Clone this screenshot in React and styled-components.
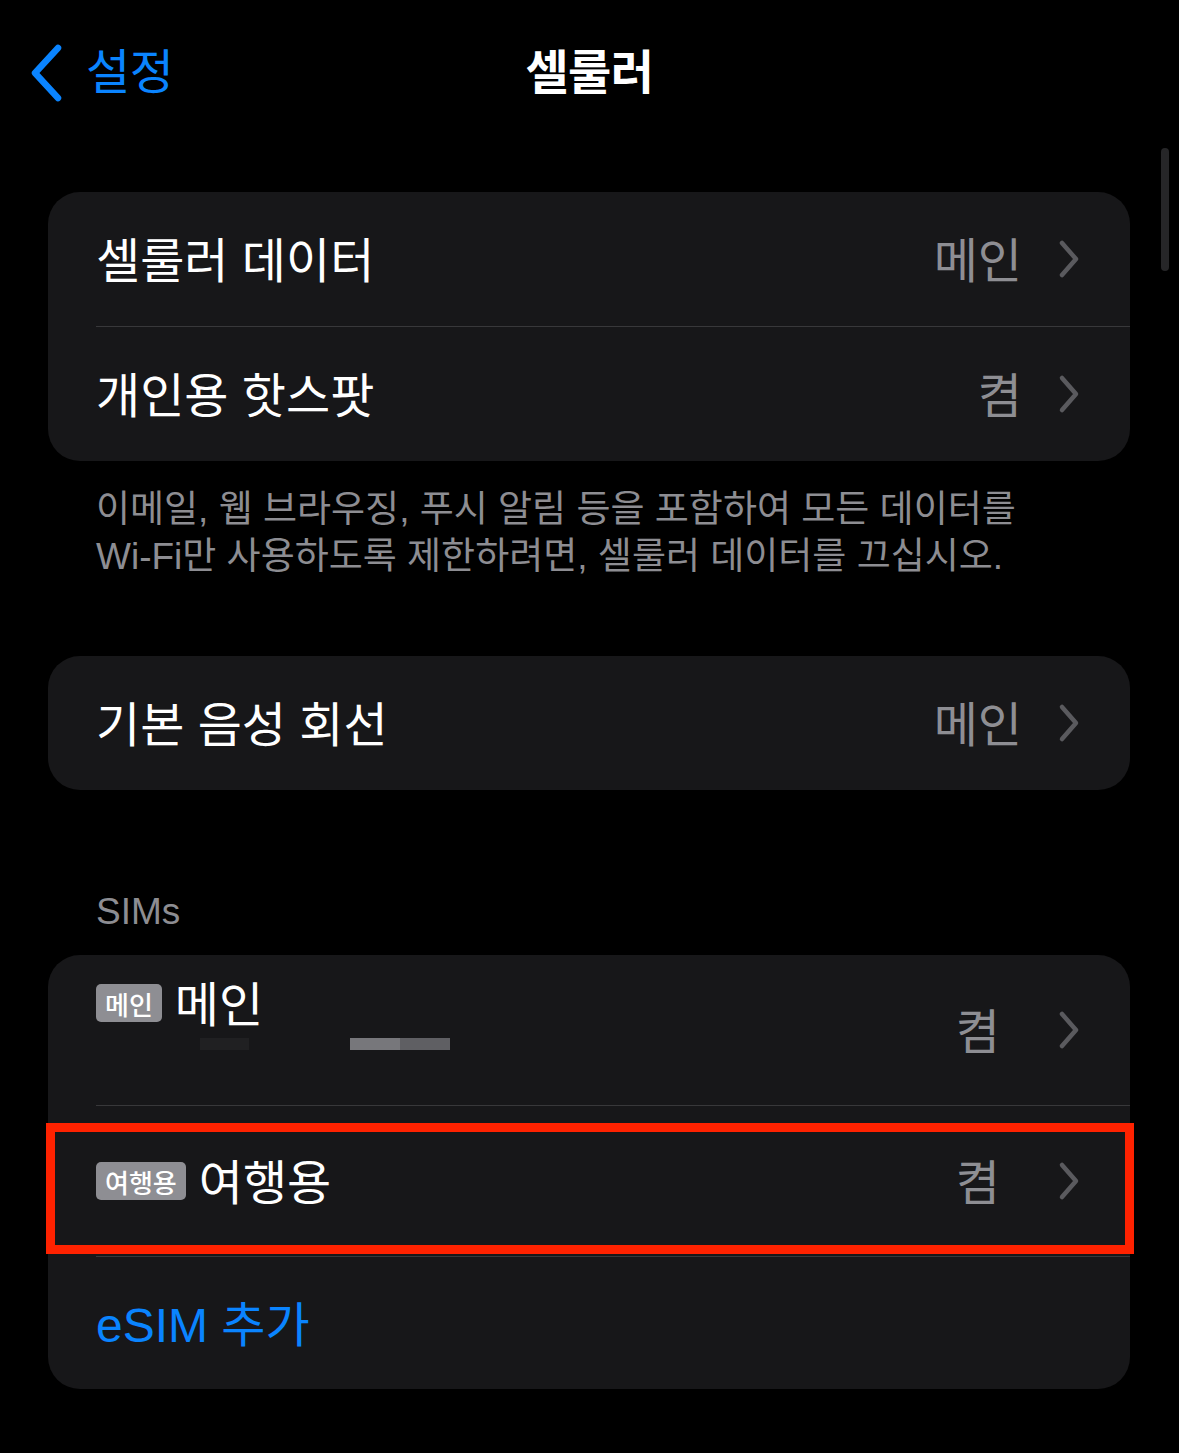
import React from "react";
import styled, { createGlobalStyle } from "styled-components";

const Global = createGlobalStyle`
  html, body { margin: 0; padding: 0; background: #000; }
  body {
    font-family: "Liberation Sans", "Noto Sans CJK KR", sans-serif;
    -webkit-font-smoothing: antialiased;
  }
  * { box-sizing: border-box; }
`;

const BLUE = "#0a84ff";
const GRAY = "#8e8e93";

const Page = styled.div`
  position: relative;
  width: 1179px;
  min-height: 1453px;
  background: #000;
  color: #fff;
`;

const NavBar = styled.header`
  display: grid;
  grid-template-columns: 1fr auto 1fr;
  align-items: center;
  height: 145px;
  padding: 0 28px;
`;

const BackButton = styled.div`
  display: flex;
  align-items: center;
  gap: 22px;
  color: ${BLUE};
  font-size: 48px;
  letter-spacing: -0.5px;
  line-height: 1;
`;

const NavTitle = styled.h1`
  margin: 0;
  font-size: 47px;
  font-weight: 700;
  letter-spacing: -0.5px;
  line-height: 1;
`;

const Content = styled.main`
  display: flex;
  flex-direction: column;
  padding: 47px 49px 0 48px;
`;

const Card = styled.section`
  background: #171719;
  border-radius: 32px;
  display: flex;
  flex-direction: column;
  margin-top: ${(p) => p.$mt || 0}px;
`;

const Row = styled.div`
  position: relative;
  padding-left: 48px;
  height: ${(p) => p.$h}px;
`;

const RowInner = styled.div`
  display: flex;
  align-items: ${(p) => (p.$top ? "stretch" : "center")};
  justify-content: space-between;
  height: 100%;
  padding-right: 50px;
  border-bottom: ${(p) => (p.$sep ? "1px solid #38383a" : "none")};
`;

const Label = styled.span`
  font-size: 48px;
  line-height: 1;
  padding-top: 5px;
  color: ${(p) => p.$color || "#fff"};
`;

const Trailing = styled.div`
  display: flex;
  align-items: center;
  gap: ${(p) => p.$gap || 38}px;
`;

const Value = styled.span`
  font-size: 48px;
  line-height: 1;
  padding-top: 5px;
  color: ${GRAY};
`;

const Footer = styled.p`
  margin: 25px 0 0;
  padding: 0 48px;
  font-size: 37px;
  line-height: 47px;
  color: #8d8d92;
`;

const SectionHeader = styled.h2`
  margin: 100px 0 0;
  padding: 0 48px;
  font-size: 37px;
  font-weight: 400;
  line-height: 44px;
  color: #8d8d92;
`;

const SimInfo = styled.div`
  display: flex;
  flex-direction: column;
  padding-top: ${(p) => p.$pt || 0}px;
`;

const TitleLine = styled.div`
  display: flex;
  align-items: center;
  gap: 13px;
  height: 56px;
`;

const Badge = styled.span`
  display: inline-flex;
  align-items: center;
  justify-content: center;
  height: 38px;
  padding: 0 9px;
  border-radius: 5px;
  background: ${GRAY};
  color: #fff;
  font-size: 26px;
  font-weight: 500;
`;

const MaskedLine = styled.div`
  display: flex;
  gap: 101px;
  margin-top: 7px;
  padding-left: 104px;
`;

const Mask = styled.span`
  display: block;
  height: 12px;
  width: ${(p) => p.$w}px;
  background: ${(p) => p.$bg};
`;

const Highlight = styled.div`
  position: absolute;
  top: 17px;
  left: -2px;
  right: -4px;
  height: 131px;
  border: 9px solid #ff2200;
  pointer-events: none;
`;

const ScrollThumb = styled.div`
  position: absolute;
  top: 148px;
  right: 10px;
  width: 8px;
  height: 123px;
  border-radius: 4px;
  background: #262628;
`;

const Chevron = () => (
  <svg width="22" height="40" viewBox="0 0 22 40" fill="none">
    <path d="M4 4 L18 20 L4 36" stroke="#5a5a5e" strokeWidth="4.5" strokeLinecap="round" strokeLinejoin="round" />
  </svg>
);

const BackChevron = () => (
  <svg width="36" height="60" viewBox="0 0 36 60" fill="none">
    <path d="M30 5 L7 30 L30 55" stroke={BLUE} strokeWidth="6.5" strokeLinecap="round" strokeLinejoin="round" />
  </svg>
);

const NavRow = ({ label, value, sep, h = 134 }) => (
  <Row $h={h}>
    <RowInner $sep={sep}>
      <Label>{label}</Label>
      <Trailing $gap={36}>
        <Value>{value}</Value>
        <Chevron />
      </Trailing>
    </RowInner>
  </Row>
);

export default function App() {
  return (
    <Page>
      <Global />
      <NavBar>
        <BackButton>
          <BackChevron />
          <span>설정</span>
        </BackButton>
        <NavTitle>셀룰러</NavTitle>
        <div />
      </NavBar>
      <ScrollThumb />
      <Content>
        <Card>
          <NavRow label="셀룰러 데이터" value="메인" sep h={135} />
          <NavRow label="개인용 핫스팟" value="켬" />
        </Card>
        <Footer>
          이메일, 웹 브라우징, 푸시 알림 등을 포함하여 모든 데이터를
          <br />
          Wi-Fi만 사용하도록 제한하려면, 셀룰러 데이터를 끄십시오.
        </Footer>
        <Card $mt={76}>
          <NavRow label="기본 음성 회선" value="메인" />
        </Card>
        <SectionHeader>SIMs</SectionHeader>
        <Card $mt={21}>
          <Row $h={151}>
            <RowInner $sep $top>
              <SimInfo $pt={20}>
                <TitleLine>
                  <Badge>메인</Badge>
                  <Label>메인</Label>
                </TitleLine>
                <MaskedLine>
                  <Mask $w={49} $bg="#202022" />
                  <Mask $w={100} $bg="linear-gradient(90deg, #77777b 50%, #5f5f63 50%)" />
                </MaskedLine>
              </SimInfo>
              <Trailing $gap={58}>
                <Value>켬</Value>
                <Chevron />
              </Trailing>
            </RowInner>
          </Row>
          <Row $h={151}>
            <RowInner $sep>
              <TitleLine>
                <Badge>여행용</Badge>
                <Label>여행용</Label>
              </TitleLine>
              <Trailing $gap={58}>
                <Value>켬</Value>
                <Chevron />
              </Trailing>
            </RowInner>
            <Highlight />
          </Row>
          <Row $h={132}>
            <RowInner>
              <Label $color={BLUE}>eSIM 추가</Label>
            </RowInner>
          </Row>
        </Card>
      </Content>
    </Page>
  );
}
